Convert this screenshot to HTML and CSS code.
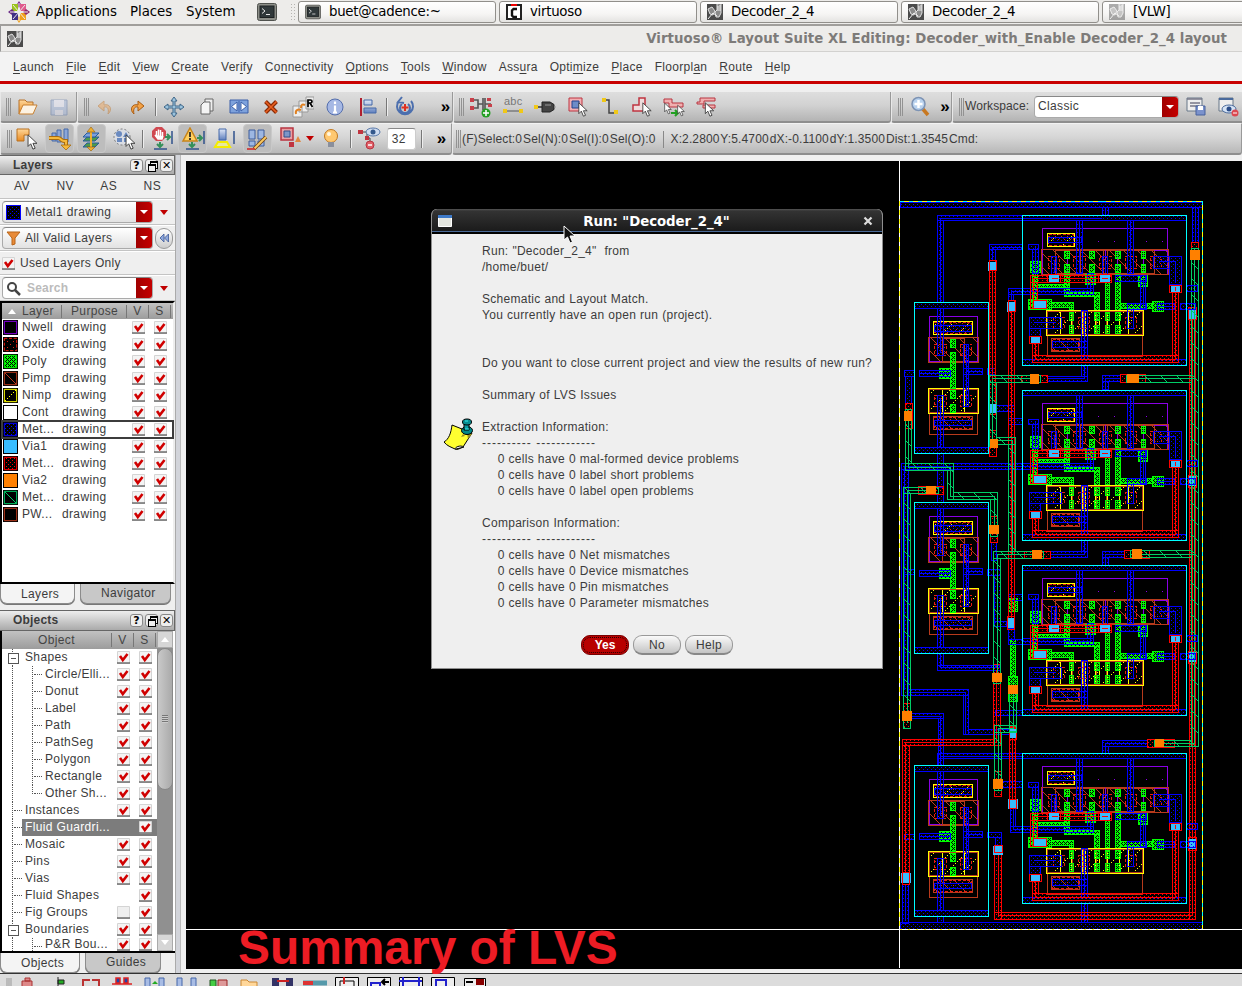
FILE: index.html
```html
<!DOCTYPE html>
<html lang="en">
<head>
<meta charset="utf-8">
<title>Virtuoso Layout Suite XL</title>
<link rel="stylesheet" href="styles.css">
</head>
<body>
<svg class="defs" aria-hidden="true">
<defs>
<linearGradient id="gBlue" x2="0" y2="1"><stop stop-color="#dfe8f8"/><stop offset="1" stop-color="#5f7fbd"/></linearGradient>
<linearGradient id="gOr" x2="0" y2="1"><stop stop-color="#ffd79a"/><stop offset="1" stop-color="#e98a20"/></linearGradient>
<symbol id="ck" viewBox="0 0 13 13"><path d="M.5.5h12v12H.5z" fill="#f4f4f4" stroke="#d4d4d4"/><path d="M0 12h13" stroke="#666" stroke-width="1.4"/><path d="M3 5l2.800 4L10.500 3" fill="none" stroke="#d00000" stroke-width="2.600"/></symbol>
<symbol id="un" viewBox="0 0 13 13"><path d="M.5.5h12v12H.5z" fill="#efefef" stroke="#d4d4d4"/><path d="M0 12h13" stroke="#666" stroke-width="1.4"/></symbol>
<symbol id="term" viewBox="0 0 20 18"><rect x=".5" y=".5" width="19" height="17" rx="2" fill="#8c8e88" stroke="#50524e"/><rect x="3" y="3" width="14" height="11.500" fill="#30383a" stroke="#1d2122"/><path d="M5 5.500l3 2.500-3 2.500M9 11.500h4" fill="none" stroke="#e8e8e8"/></symbol>
<symbol id="vlay" viewBox="0 0 16 16"><path d="M0 0h16v16H0z" fill="#4b4b4b"/><path d="M1 5l4-2 3 4-2 4-3-1zM10 0v6l-2 2 1 5h3l2-4V0" fill="#8a8a8a" stroke="#e0e0e0"/><path d="M1 15l5-6 4 3M11 2v5M13 1v6" fill="none" stroke="#f2f2f2"/></symbol>
<symbol id="cur" viewBox="0 0 12 18"><path d="M1 1v13l3-3 2.500 6 2.500-1-2.500-5.500H11z" fill="#fff" stroke="#333"/></symbol>
<symbol id="grip" viewBox="0 0 6 18"><path d="M.5 0v18M2.500 0v18M4.500 0v18" stroke="#929292"/></symbol>
<pattern id="p1" width="12" height="12" patternUnits="userSpaceOnUse"><path d="M0 0h3v3H0zM6 6h3v3H6z" fill="#00f"/></pattern>
<pattern id="p2" width="12" height="12" patternUnits="userSpaceOnUse"><path d="M3 0h3v3H3zM9 6h3v3H9z" fill="#f00"/></pattern>
<pattern id="p3" width="48" height="48" patternUnits="userSpaceOnUse"><path d="M0 0L48 48" stroke="#00cc66" stroke-width="3"/></pattern>
<pattern id="pp" width="12" height="12" patternUnits="userSpaceOnUse"><path d="M0 0h3v3H0zM3 3h3v3H3zM6 0h3v3H6zM9 3h3v3H9zM0 6h3v3H0zM3 9h3v3H3zM6 6h3v3H6zM9 9h3v3H9zM6 3h3v3H6zM0 9h3v3H0z" fill="#0f0"/></pattern>
<pattern id="pi" width="42" height="42" patternUnits="userSpaceOnUse"><path d="M0 0L42 42" stroke="#c0391f" stroke-width="3"/></pattern>
<pattern id="pn" width="48" height="48" patternUnits="userSpaceOnUse"><path d="M0 42h3v3H0zM6 36h3v3H6zM12 30h3v3h-3zM18 24h3v3h-3zM24 18h3v3h-3zM30 12h3v3h-3zM36 6h3v3h-3zM42 0h3v3h-3z" fill="#ff0"/></pattern>
<pattern id="px" width="18" height="18" patternUnits="userSpaceOnUse"><path d="M3 3h3v3H3zM12 12h3v3h-3z" fill="#e02010"/></pattern>

<!-- four-input gate cell -->
<g id="gate">
<path class="nw" d="M442 115h376v137H442z"/>
<path class="nwd" d="M610 154h3M658 154h3M754 154h3M802 154h3"/>
<path class="pi" d="M439 178h382v75H439zM481 181h297v69H481zM469 445h85v39h-85z"/>
<path class="pl" d="M518 181v69M555 181v69M626 181v69M637 181v69M715 181v69M457 433h285v66H457zM569 361v138"/>
<path class="nw" d="M545 181v69M630 181v69M668 181v69M705 181v69M745 181v69M518 205v45M778 181h40v18"/>
<path class="po" d="M508 184h15v21h-15zM583 184h16v21h-16zM661 184h16v21h-16zM739 184h12v21h-12zM508 223h15v24h-15zM583 223h16v24h-16zM661 223h16v24h-16zM739 223h12v24h-12zM406 214h31v33h-31zM412 250h15v105h-15zM427 283h96v10h-96zM508 253h15v67h-15zM508 307h106v13H508zM598 320h16v41h-16zM631 277h13v84h-13zM661 253h16v108h-16zM677 340h95v15h-95zM772 334h33v30h-33zM730 256h27v34h-27zM571 253h31v30h-31zM400 328h69v30h-69zM469 337h67v15h-67zM523 352h13v9h-13z"/>
<path class="ni" d="M454 361h291v75H454z"/>
<path class="nl" d="M496 364v69h33v-69M562 364v69M571 364v69M601 364v69M613 364v69M674 364v69M700 364v69M637 364v69"/>
<path class="pl" d="M457 364h285v69H457zM532 364v69M566 364v69M605 364v69M634 364v69"/>
<path class="po" d="M523 367h13v24h-13zM598 367h16v24h-16zM631 367h13v24h-13zM661 367h16v24h-16zM523 406h13v24h-13zM598 406h16v24h-16zM631 406h13v24h-13zM661 406h16v24h-16z"/>
<path class="ox" d="M460 199h34v36h-34zM536 199h36v36h-36zM614 199h34v36h-34zM691 199h34v36h-34zM766 199h34v36h-34zM474 382h34v33h-34zM550 382h33v33h-33zM691 382h33v33h-33zM473 449h78v32h-78z"/>
<path class="yb" d="M457 130h82v39h-82z"/><path class="ox" d="M461 134h74v31h-74z"/>
<path class="m1" d="M382 76h493v15H382zM382 508h493v18H382zM544 91h19v159h-19zM697 91h19v159h-19zM400 163h31v15h-31zM412 178h19v72h-19zM460 142h100v15H460zM469 199h16v54h-16zM623 199h15v54h-15zM775 199h48v36h-48zM823 199h37v84h-37zM382 295h214v18H382zM578 250h18v45h-18zM660 256h95v18h-95zM736 256h16v99h-16zM697 340h58v18h-58zM697 358h19v57h-19zM787 340h50v18h-50zM403 382h97v33h-97zM403 415h33v25h-33zM472 454h106v18H472zM559 361h19v147h-19zM856 340h46v18h-46zM875 286h33v18h-33z"/>
<path class="l1" d="M554 91v159M706 91v159M422 170v80M477 210v40M631 210v40M793 214h48v66M418 398h64M587 270v34H382M745 265v84M569 361v147M788 349h48"/>
<path class="m2" d="M406 256h244v21H406zM406 277h21v78h-21zM832 286h19v231h-19zM412 496h439v21H412zM412 439h19v57h-19z"/>
<path class="l2" d="M416 350v-84h215M841 296v212H422v-60"/>
<path class="v1" d="M462 253h30v26h-30zM615 253h30v26h-30zM418 330h34v26h-34zM827 284h28v26h-28zM407 437h29v25h-29z"/>
<path class="b2x" d="M457 253h40v24h-40zM611 253h39v24h-39zM415 331h39v24h-39zM823 286h36v21h-36zM403 439h36v21h-36zM470 266h20M620 266h20M841 290v14"/>
<path class="cy" d="M382 76h493v450H382z"/>
</g>

<!-- inverter cell -->
<g id="inv">
<path class="nw" d="M103 379h145v136H103z"/>
<path class="pi" d="M100 442h151v75H100zM142 445h67v70h-67zM115 679h118v39H115z"/>
<path class="pl" d="M103 670h145v63H103z"/>
<path class="ni" d="M100 595h151v75H100z"/><path class="nl" d="M142 598v69h67v-69"/><path class="pl" d="M103 598h145v69H103z"/>
<path class="po" d="M167 448h15v24h-15zM167 487h15v108h-15zM133 535h34v30h-34zM167 600h15v25h-15zM167 643h15v24h-15z"/>
<path class="yb" d="M115 394h118v39H115z"/>
<path class="ox" d="M119 398h110v31H119zM118 463h36v34h-36zM196 463h34v34h-34zM118 616h36v34h-36zM196 616h34v34h-34zM119 683h110v31H119z"/>
<path class="m1" d="M58 337h223v18H58zM58 773h223v17H58zM127 355h19v141h-19zM118 406h112v18H118zM73 541h94v18H73zM205 463h15v187h-15zM205 535h58v18h-58zM127 616h19v157h-19zM118 691h112v15H118z"/>
<path class="l1" d="M137 355v135M213 463v187M213 544h50M73 550h94M137 625v148"/>
<path class="cy" d="M58 337h223v453H58z"/>
</g>
</defs>
</svg>

<header class="panel">
  <svg class="foot" viewBox="0 0 22 22"><path fill="#7a1f8f" d="M11 0l2.500 4-2.500 3-2.500-3z"/><path fill="#9bc31c" d="M4 3h6v7H4z"/><path fill="#6a2a86" d="M0 11l4-3 3 3-3 3z"/><path fill="#e05a8c" d="M12 3h6v7h-6z"/><path fill="#f0a01c" d="M12 12h6v7h-6zM11 22l-2.500-4 2.500-3 2.500 3z"/><path fill="#3f2f86" d="M4 12h6v7H4z"/><path fill="#8f2a6b" d="M22 11l-4 3-3-3 3-3z"/><path d="M5 4l12 14M17 4L5 18M11 2v18M2 11h18" stroke="#ececea"/></svg>
  <span class="gm g1">Applications</span><span class="gm g2">Places</span><span class="gm g3">System</span>
  <svg class="launch"><use href="#term"/></svg>
  <span class="dots"></span>
  <div class="tasks">
    <div class="task"><svg class="i16"><use href="#term"/></svg>buet@cadence:~</div>
    <div class="task"><svg class="i16" viewBox="0 0 16 16"><path d="M1 1h14v14H1z" fill="#fff" stroke="#222" stroke-width="2"/><path d="M5 1h6" stroke="#e00" stroke-width="2"/><path d="M11 5H7.500L6 6.500v5L7.500 13H11" fill="none" stroke="#111" stroke-width="2.400"/></svg>virtuoso</div>
    <div class="task"><svg class="i16"><use href="#vlay"/></svg>Decoder_2_4</div>
    <div class="task"><svg class="i16"><use href="#vlay"/></svg>Decoder_2_4</div>
    <div class="task"><svg class="i16 faded"><use href="#vlay"/></svg>[VLW]</div>
  </div>
</header>
<div class="wtitle"><svg class="i16"><use href="#vlay"/></svg><span>Virtuoso® Layout Suite XL Editing: Decoder_with_Enable Decoder_2_4 layout</span></div>
<nav class="menu"><span><u>L</u>aunch</span><span><u>F</u>ile</span><span><u>E</u>dit</span><span><u>V</u>iew</span><span><u>C</u>reate</span><span>Ver<u>i</u>fy</span><span>Co<u>n</u>nectivity</span><span><u>O</u>ptions</span><span><u>T</u>ools</span><span><u>W</u>indow</span><span>Ass<u>u</u>ra</span><span>Opti<u>m</u>ize</span><span><u>P</u>lace</span><span>Floorpl<u>a</u>n</span><span><u>R</u>oute</span><span><u>H</u>elp</span></nav>

<div class="bar bar1">
  <div class="grp a1"><svg class="grip"><use href="#grip"/></svg>
    <svg class="ic" viewBox="0 0 22 22"><path d="M3 18V4h6l2 2h6v3" fill="url(#gOr)" stroke="#b8732a"/><path d="M3 18L7 9h14l-4 9z" fill="#fdf3e3" stroke="#c88030"/></svg>
    <svg class="ic faded" viewBox="0 0 22 22"><path d="M3 4h16v15H3z" fill="#9fb4dd" stroke="#5a74a8"/><path d="M6 4h10v7H6z" fill="#eef" /><path d="M7 14h8v5H7z" fill="#dde"/></svg></div>
  <div class="grp a2"><svg class="grip"><use href="#grip"/></svg>
    <svg class="ic faded" viewBox="0 0 22 22"><path d="M14 18c5-4 2-11-4-9V5L4 10l6 5v-4c4-1 5 3 4 7z" fill="#f0a050" stroke="#c07020"/></svg>
    <svg class="ic" viewBox="0 0 22 22"><path d="M8 18c-5-4-2-11 4-9V5l6 5-6 5v-4c-4-1-5 3-4 7z" fill="#f4a245" stroke="#a85c14"/></svg>
    <i class="sep"></i>
    <svg class="ic" viewBox="0 0 22 22"><path d="M11 1l3 4h-2v5h5V8l4 3-4 3v-2h-5v5h2l-3 4-3-4h2v-5H5v2l-4-3 4-3v2h5V5H8z" fill="#9bc3dd" stroke="#3f6688"/></svg>
    <svg class="ic" viewBox="0 0 22 22"><path d="M9 3h8v12H9z" fill="#eee" stroke="#666"/><path d="M5 9l3-3h6v12H5z" fill="#f4f4f4" stroke="#666"/></svg>
    <svg class="ic" viewBox="0 0 22 22"><path d="M2 4h18v13H2z" fill="#7ea2dc" stroke="#3a5fa8"/><path d="M3.500 10.500L9 6v9zM18.500 10.500L13 6v9zM11 5v11" fill="#fff" stroke="#3a5fa8"/></svg>
    <svg class="ic" viewBox="0 0 22 22"><path d="M5.500 5.500l11 11M16.500 5.500l-11 11" stroke="#8c2a05" stroke-width="4"/><path d="M5.500 5.500l11 11M16.500 5.500l-11 11" stroke="#ea6020" stroke-width="1.600"/></svg>
    <svg class="ic" viewBox="0 0 22 22"><path d="M1 10h9v11H1zM7 5h9v11H7zM14 1h8v12h-8z" fill="#eee" stroke="#999"/><path d="M4 18c-1-4 2-5 5-4M9 12c0-4 2-4 4-3" fill="none" stroke="#e08020" stroke-width="2"/><path d="M16 11V4h2.500c2 0 2 3 0 3H16M18 7l2.500 4" fill="none" stroke="#000" stroke-width="1.700"/></svg>
    <svg class="ic" viewBox="0 0 22 22"><circle cx="11" cy="11" r="8" fill="#a6b8e4" stroke="#546eac"/><path d="M11 5.500v2.500M11 9.500v7M9 16.500h4" stroke="#fff" stroke-width="2.200"/></svg>
    <svg class="ic" viewBox="0 0 22 22"><path d="M4 2v18" stroke="#b02030" stroke-width="2"/><path d="M7 4h8v5H7zM7 12h12v5H7z" fill="url(#gBlue)" stroke="#4468a8"/></svg>
    <i class="sep"></i>
    <svg class="ic" viewBox="0 0 22 22"><path d="M5 5a8 8 0 1 0 12 0M8 1L4 6l6 1M8 8a5 5 0 1 0 6 0" fill="none" stroke="#4c6fae" stroke-width="2"/><path d="M11 8v7M7.500 11.500h7" stroke="#e03020" stroke-width="2"/></svg>
    <b class="more m1x">»</b></div>
  <div class="grp a3"><svg class="grip"><use href="#grip"/></svg>
    <svg class="ic" viewBox="0 0 22 22"><path d="M2 4h6v8H2M8 8h5M13 2v12M15 2v12M15 8h6" fill="none" stroke="#555" stroke-width="1.600"/><path d="M0 2h4v4H0zM0 10h4v4H0zM17 2h4v3h-4zM18 8h4v3h-4z" fill="#c8404a"/><circle cx="16" cy="17" r="4.500" fill="#22a022"/><path d="M16 14v6M13 17h6" stroke="#fff" stroke-width="1.500"/></svg>
    <span class="ic abc">abc<svg viewBox="0 0 20 4"><path d="M2 2h16" stroke="#555"/><path d="M0 0h4v4H0zM16 0h4v4h-4z" fill="#f0c818"/></svg></span>
    <svg class="ic" viewBox="0 0 22 22"><path d="M2 11h7" stroke="#333" stroke-width="1.500"/><path d="M0 9h4v4H0z" fill="#f0c818"/><path d="M8 6h8l4 2.500v5L16 16H8z" fill="#444" stroke="#222"/><path d="M20 11h2M11 9h6" stroke="#999"/></svg>
    <svg class="ic" viewBox="0 0 22 22"><path d="M2 2h13v13H2z" fill="#f2b0b4" stroke="#bc3440"/><path d="M5 5h7v7H5z" fill="#6c8cc8" stroke="#24428c"/><use href="#cur" x="11" y="6" width="10" height="15"/></svg>
    <svg class="ic" viewBox="0 0 22 22"><path d="M5 4h5v13h7" fill="none" stroke="#444" stroke-width="1.500"/><path d="M3 2h4v4H3zM15 14h4v4h-4z" fill="#f0c818"/></svg>
    <svg class="ic" viewBox="0 0 22 22"><path d="M2 15V9h6V2h6v13z" fill="#eedddd" stroke="#c03440" stroke-width="1.500"/><use href="#cur" x="11" y="6" width="10" height="15"/></svg>
    <svg class="ic" viewBox="0 0 22 22"><path d="M1 3h8v4h11v4H6V7H1z" fill="#f0b0b0" stroke="#b83440"/><path d="M8 17h7M12 14l3 3-3 3" fill="none" stroke="#20a020" stroke-width="2"/><use href="#cur" x="1" y="6" width="8" height="13"/><use href="#cur" x="14" y="8" width="8" height="13"/></svg>
    <svg class="ic" viewBox="0 0 22 22"><path d="M5 2h15v3H9v3H2V6h3zM8 9h12v3H8z" fill="#f0b0b0" stroke="#b83440"/><use href="#cur" x="9" y="6" width="11" height="15"/></svg></div>
  <div class="grp a4"><svg class="grip"><use href="#grip"/></svg>
    <svg class="ic" viewBox="0 0 22 22"><path d="M13 12l6 7" stroke="#c87820" stroke-width="3.500"/><circle cx="9.500" cy="8" r="6.500" fill="#b9d2ee" stroke="#7d93b4" stroke-width="1.500"/><path d="M9.500 4v8M5.500 8h8" stroke="#fff" stroke-width="2.500"/></svg><b class="more m4x">»</b></div>
  <div class="grp a5"><svg class="grip"><use href="#grip"/></svg><span class="ws">Workspace:</span><div class="combo white wsc"><span>Classic</span><i class="dd"></i></div>
    <svg class="ic" viewBox="0 0 22 22"><path d="M2 2h15v13H2z" fill="#eee" stroke="#667788"/><path d="M2 3h15M5 7h10M5 10h9" stroke="#778" stroke-width="1.500"/><path d="M11 10h9v9h-9z" fill="#7b92cc" stroke="#46609c"/><path d="M13 10h5v4h-5z" fill="#fff"/></svg>
    <svg class="ic" viewBox="0 0 22 22"><path d="M2 2h14v13H2z" fill="#eee" stroke="#667788"/><path d="M2 3h14" stroke="#4a6a9c" stroke-width="2"/><ellipse cx="12" cy="13" rx="7" ry="4" fill="#d5e3f5" stroke="#4a6a9c"/><circle cx="12" cy="13" r="2.500" fill="#2a4c88"/><circle cx="18" cy="17" r="3.500" fill="#dc4850"/><path d="M16 17h4" stroke="#fff"/></svg></div>
</div>
<div class="bar bar2">
  <div class="grp b1"><svg class="grip"><use href="#grip"/></svg>
    <svg class="ic" viewBox="0 0 24 24"><path d="M2 2h12v6H9v6H2z" fill="url(#gOr)" stroke="#b87020"/><use href="#cur" x="12" y="7" width="11" height="16"/></svg>
    <span class="ic on"><svg viewBox="0 0 24 24"><path d="M10 3h4v12h-4zM17 2h4v13h-4zM5 6h4v8H5z" fill="#8ba6d8" stroke="#4468a8"/><path d="M2 11h9c3 0 3 3 6 3h2v5" fill="none" stroke="#a86c10" stroke-width="4"/><path d="M2 11h9c3 0 3 3 6 3h2v5" fill="none" stroke="#f6b93c" stroke-width="2"/><path d="M14 18h10l-5 5z" fill="#f6b93c" stroke="#a86c10" stroke-width=".8"/></svg></span>
    <span class="ic on"><svg viewBox="0 0 24 24"><path d="M4 20l4-4h12l-4 4zM4 14l4-4h12l-4 4z" fill="#4f9a4a" stroke="#275ca0"/><path d="M4 10l4-4h12l-4 4z" fill="#7da0dc" stroke="#275ca0"/><path d="M12 20V4" stroke="#f0b030" stroke-width="2"/><path d="M12 0l4 5H8zM12 24l4-4H8z" fill="#f0b030" stroke="#946010" stroke-width=".6"/></svg></span>
    <svg class="ic" viewBox="0 0 24 24"><circle cx="10" cy="10" r="8" fill="#dadde4" stroke="#777" stroke-dasharray="2 2"/><circle cx="7" cy="7" r="3" fill="#6a8ac0"/><path d="M14 5l3 5h-6zM5 11h5v4H5zM12 11h4v4h-4z" fill="#6a8ac0"/><use href="#cur" x="13" y="7" width="11" height="16"/></svg>
    <i class="sep"></i>
    <svg class="ic" viewBox="0 0 24 24"><path d="M7 0h6l4 4v6l-4 4H7l-4-4V4z" fill="#d04850"/><path d="M7.500 9V4M9.500 9V2.500M11.500 9V3M13.500 9V5M6 8l3 4h4l1-3" stroke="#fff" stroke-width="1.500" fill="#fff"/><path d="M23 4v13M5 22h13" stroke="#30528c" stroke-width="1.500"/><path d="M16 10h5M18 7l3 3-3 3M11 15v5M8 17l3 3 3-3" fill="none" stroke="#35905a" stroke-width="2"/></svg>
    <span class="ic on"><svg viewBox="0 0 24 24"><path d="M9 1l7 13H2z" fill="#ffd060" stroke="#c88418" stroke-width="1.500"/><path d="M9 5v5M9 11v2" stroke="#222" stroke-width="1.700"/><path d="M23 4v13M5 22h13" stroke="#30528c" stroke-width="1.500"/><path d="M16 11h5M18 8l3 3-3 3M11 15v5M8 17l3 3 3-3" fill="none" stroke="#35905a" stroke-width="2"/></svg></span>
    <svg class="ic" viewBox="0 0 24 24"><path d="M6 2h7v11H6z" fill="url(#gBlue)" stroke="#4468a8"/><path d="M5 15h9l3 5H2z" fill="#e8e8a0" stroke="#f4ec00" stroke-width="2"/><path d="M21 4v13" stroke="#30528c" stroke-width="1.500"/></svg>
    <span class="ic on"><svg viewBox="0 0 24 24"><path d="M4 3h6v9H4zM13 3h6v9h-6zM4 14h6v5H4zM13 14h6v5h-6z" fill="#9db7e2" stroke="#3c5c9c"/><path d="M21 10L9 22" stroke="#704010" stroke-width="3.500"/><path d="M21 10L9 22" stroke="#f8c860" stroke-width="2"/><path d="M2 22h8" stroke="#d02020" stroke-width="1.500"/></svg></span>
    <svg class="ic" viewBox="0 0 24 24"><path d="M3 1h12v12H3z" fill="#e8a0a4" stroke="#b83440" stroke-width="1.500"/><path d="M6 4h6v6H6z" fill="#7c96c8" stroke="#30508c"/><path d="M11 15h5v5h-5z" fill="#c03440"/><path d="M20 9l3 6h-6z" fill="#e08840"/></svg>
    <i class="rarr"></i>
    <svg class="ic bulb" viewBox="0 0 24 24"><circle cx="12" cy="9" r="6.500" fill="#ffc870" stroke="#c07820"/><path d="M9 15h6v5H9z" fill="#8a8f9c"/><circle cx="10" cy="7" r="2" fill="#fff6e0"/></svg>
    <i class="sep"></i>
    <svg class="ic" viewBox="0 0 24 24"><path d="M4 5h6v6h3v5" fill="none" stroke="#444"/><path d="M1 3h5v4H1zM8 9h4v4H8z" fill="#c03440"/><ellipse cx="16" cy="5" rx="7" ry="4" fill="#cfdcf0" stroke="#5878a8"/><circle cx="16" cy="5" r="2.500" fill="#34588c"/><circle cx="13" cy="18" r="4" fill="#e06068" stroke="#b83440"/><path d="M11 18h4" stroke="#fff" stroke-width="1.500"/></svg>
    <span class="num">32</span><i class="sep s2"></i><b class="more">»</b></div>
  <div class="grp b2"><svg class="grip"><use href="#grip"/></svg><span class="st1">(F)Select:0 Sel(N):0 Sel(I):0 Sel(O):0</span><span class="st2">X:2.2800 Y:5.4700 dX:-0.1100 dY:1.3500 Dist:1.3545 Cmd:</span></div>
</div>

<main>
<aside>
  <div class="dock"><b>Layers</b><i>?</i><i class="rst"></i><i>✕</i></div>
  <div class="modes"><span>AV</span><span>NV</span><span>AS</span><span>NS</span></div>
  <div class="frow"><div class="combo side"><svg class="sw" viewBox="0 0 45 45"><path d="M1.500 1.500h42v42h-42z" class="s1"/></svg><span>Metal1 drawing</span><i class="dd"></i></div><i class="rarr"></i></div>
  <div class="frow"><div class="combo side"><svg class="sw" viewBox="0 0 15 15"><path d="M1 1h13L9 7v6l-3 1V7z" fill="#e88a38" stroke="#b86418"/></svg><span>All Valid Layers</span><i class="dd"></i></div><b class="rew"><svg viewBox="0 0 10 10"><path d="M5 1v8L1 5zM9.500 1v8l-4-4z" fill="#8fa8dc" stroke="#3c5898" stroke-width=".8"/></svg></b></div>
  <div class="frow used"><svg class="ck"><use href="#ck"/></svg><span>Used Layers Only</span></div>
  <div class="frow"><div class="combo side white"><svg class="sw" viewBox="0 0 15 15"><circle cx="6" cy="6" r="4" fill="#fff" stroke="#444" stroke-width="2"/><path d="M9 9l5 5" stroke="#444" stroke-width="2.500"/></svg><span class="ph">Search</span><i class="dd"></i></div><i class="rarr"></i></div>
  <div class="ltab">
    <div class="lr lh"><i class="up"></i><span>Layer</span><span>Purpose</span><span>V</span><span>S</span></div>
    <div class="lr"><svg class="sw" viewBox="0 0 45 45"><path class="bk" stroke="#8a00e6" d="M4 4h37v37H4z"/></svg><span>Nwell</span><span>drawing</span><svg class="ck"><use href="#ck"/></svg><svg class="ck"><use href="#ck"/></svg></div>
    <div class="lr"><svg class="sw" viewBox="0 0 45 45"><path class="bk ox" d="M4 4h37v37H4z"/></svg><span>Oxide</span><span>drawing</span><svg class="ck"><use href="#ck"/></svg><svg class="ck"><use href="#ck"/></svg></div>
    <div class="lr"><svg class="sw" viewBox="0 0 45 45"><path class="po" d="M4 4h37v37H4z"/></svg><span>Poly</span><span>drawing</span><svg class="ck"><use href="#ck"/></svg><svg class="ck"><use href="#ck"/></svg></div>
    <div class="lr"><svg class="sw" viewBox="0 0 45 45"><path class="pi" d="M4 4h37v37H4z"/></svg><span>Pimp</span><span>drawing</span><svg class="ck"><use href="#ck"/></svg><svg class="ck"><use href="#ck"/></svg></div>
    <div class="lr"><svg class="sw" viewBox="0 0 45 45"><path class="ni" d="M4 4h37v37H4z"/></svg><span>Nimp</span><span>drawing</span><svg class="ck"><use href="#ck"/></svg><svg class="ck"><use href="#ck"/></svg></div>
    <div class="lr"><svg class="sw" viewBox="0 0 45 45"><path fill="#fff" d="M3 3h39v39H3z"/></svg><span>Cont</span><span>drawing</span><svg class="ck"><use href="#ck"/></svg><svg class="ck"><use href="#ck"/></svg></div>
    <div class="lr cur"><svg class="sw" viewBox="0 0 45 45"><path class="m1" d="M4 4h37v37H4z"/></svg><span>Met...</span><span>drawing</span><svg class="ck"><use href="#ck"/></svg><svg class="ck"><use href="#ck"/></svg></div>
    <div class="lr"><svg class="sw" viewBox="0 0 45 45"><path fill="#38bdff" d="M3 3h39v39H3z"/></svg><span>Via1</span><span>drawing</span><svg class="ck"><use href="#ck"/></svg><svg class="ck"><use href="#ck"/></svg></div>
    <div class="lr"><svg class="sw" viewBox="0 0 45 45"><path class="m2" d="M4 4h37v37H4z"/></svg><span>Met...</span><span>drawing</span><svg class="ck"><use href="#ck"/></svg><svg class="ck"><use href="#ck"/></svg></div>
    <div class="lr"><svg class="sw" viewBox="0 0 45 45"><path fill="#ff8000" d="M3 3h39v39H3z"/></svg><span>Via2</span><span>drawing</span><svg class="ck"><use href="#ck"/></svg><svg class="ck"><use href="#ck"/></svg></div>
    <div class="lr"><svg class="sw" viewBox="0 0 45 45"><path class="m3" d="M4 4h37v37H4z"/></svg><span>Met...</span><span>drawing</span><svg class="ck"><use href="#ck"/></svg><svg class="ck"><use href="#ck"/></svg></div>
    <div class="lr"><svg class="sw" viewBox="0 0 45 45"><path class="bk" stroke="#b83a1c" d="M4 4h37v37H4z"/></svg><span>PW...</span><span>drawing</span><svg class="ck"><use href="#ck"/></svg><svg class="ck"><use href="#ck"/></svg></div>
  </div>
  <div class="tabs t1"><span class="act">Layers</span><span>Navigator</span></div>
  <div class="dock d2"><b>Objects</b><i>?</i><i class="rst"></i><i>✕</i></div>
  <div class="otab">
    <div class="olist">
      <div class="or oh"><span>Object</span><span>V</span><span>S</span></div>
      <div class="or box"><span>Shapes</span><svg class="ck"><use href="#ck"/></svg><svg class="ck"><use href="#ck"/></svg></div>
      <div class="or sub"><span>Circle/Elli...</span><svg class="ck"><use href="#ck"/></svg><svg class="ck"><use href="#ck"/></svg></div>
      <div class="or sub"><span>Donut</span><svg class="ck"><use href="#ck"/></svg><svg class="ck"><use href="#ck"/></svg></div>
      <div class="or sub"><span>Label</span><svg class="ck"><use href="#ck"/></svg><svg class="ck"><use href="#ck"/></svg></div>
      <div class="or sub"><span>Path</span><svg class="ck"><use href="#ck"/></svg><svg class="ck"><use href="#ck"/></svg></div>
      <div class="or sub"><span>PathSeg</span><svg class="ck"><use href="#ck"/></svg><svg class="ck"><use href="#ck"/></svg></div>
      <div class="or sub"><span>Polygon</span><svg class="ck"><use href="#ck"/></svg><svg class="ck"><use href="#ck"/></svg></div>
      <div class="or sub"><span>Rectangle</span><svg class="ck"><use href="#ck"/></svg><svg class="ck"><use href="#ck"/></svg></div>
      <div class="or sub last"><span>Other Sh...</span><svg class="ck"><use href="#ck"/></svg><svg class="ck"><use href="#ck"/></svg></div>
      <div class="or"><span>Instances</span><svg class="ck"><use href="#ck"/></svg><svg class="ck"><use href="#ck"/></svg></div>
      <div class="or sel"><span>Fluid Guardri...</span><i></i><svg class="ck"><use href="#ck"/></svg></div>
      <div class="or"><span>Mosaic</span><svg class="ck"><use href="#ck"/></svg><svg class="ck"><use href="#ck"/></svg></div>
      <div class="or"><span>Pins</span><svg class="ck"><use href="#ck"/></svg><svg class="ck"><use href="#ck"/></svg></div>
      <div class="or"><span>Vias</span><svg class="ck"><use href="#ck"/></svg><svg class="ck"><use href="#ck"/></svg></div>
      <div class="or"><span>Fluid Shapes</span><i></i><svg class="ck"><use href="#ck"/></svg></div>
      <div class="or"><span>Fig Groups</span><svg class="ck"><use href="#un"/></svg><svg class="ck"><use href="#ck"/></svg></div>
      <div class="or box"><span>Boundaries</span><svg class="ck"><use href="#ck"/></svg><svg class="ck"><use href="#ck"/></svg></div>
      <div class="or sub end"><span>P&amp;R Bou...</span><svg class="ck"><use href="#ck"/></svg><svg class="ck"><use href="#ck"/></svg></div>
    </div>
    <div class="scroll"><i class="sb"><u class="up"></u></i><i class="thumb"></i><i class="sb dn"><u class="up"></u></i></div>
  </div>
  <div class="tabs t2"><span class="act">Objects</span><span>Guides</span></div>
</aside>
<section class="canvas">
<svg class="lay" viewBox="186 161 1056 808" shape-rendering="crispEdges">
<g transform="translate(895 190) scale(.33333333333)" fill="none" stroke-width="3">
<path class="po" d="M346 1348h15v110h-15zM340 1225h28v40h-28zM340 1458h28v77h-28z"/>
<path class="m1" d="M15 37h907v15H15zM15 2197h907v20H15zM127 76h255v15H127zM127 91h19v246h-19zM622 52h19v24h-19zM892 52h19v105h-19zM283 163h99v15h-99zM283 178h19v33h-19zM340 295h42v18h-42zM340 313h16v18h-16zM30 559h18v81H30zM28 541h30v18H28zM277 535h24v18h-24zM458 559h120v15H458zM559 526h19v33h-19zM622 556h54v18h-54zM622 574h19v24h-19zM302 646h56v18h-56zM340 685h42v18h-42zM19 820h363v18H19zM19 838h21v678H19zM40 1498h180v18H40zM205 1516h15v117h-15zM220 1618h123v15H220zM127 913h19v24h-19zM127 790h19v102h-19zM48 1570h98v15H48zM130 1585h16v141h-16zM290 1057h15v53h-15zM466 1084h112v18H466zM559 1051h19v33h-19zM622 1084h66v18h-66zM622 1102h19v24h-19zM277 1138h39v18h-39zM298 1156h18v154h-18zM298 1294h37v16h-37zM340 1213h42v18h-42zM340 1348h42v15h-42zM340 1315h18v33h-18zM127 1426h189v14H127zM127 1390h19v36h-19zM22 2083h19v117H22zM323 1774h59v19h-59zM346 1909h36v18h-36zM346 1855h15v54h-15zM127 1690h255v15H127zM127 1705h19v21h-19zM300 1561h82v14h-82zM622 1651h135v18H622zM622 1669h19v21h-19zM277 1927h43v15h-43zM302 1942h18v26h-18zM127 2179h19v18h-19zM559 2141h19v56h-19zM28 1138h30v16H28zM28 1933h30v15H28z"/>
<path class="l1" d="M137 337V85h485M292 211v-40h90M350 331v-27h32M902 52v105M632 52v24M569 526v40H458M632 598v-33h44M28 1500V829h354M569 1051v42H466M632 1126v-33h56M137 1390v43h179M212 1633v-126H40M137 1726v-148H48M632 1690v-30h125M137 1726v-28h245M32 2083v110M354 1855v63h28M569 2141v56"/>
<path class="m2" d="M283 211h19v461h-19zM340 331h18v960h-18zM889 157h21v50h-21zM884 352h18v1835h-18zM379 556h79v21h-79zM676 553h76v24h-76zM31 640h21v75H31zM283 720h21v80h-21zM287 980h19v77h-19zM70 889h76v24H70zM388 1084h78v21h-78zM688 1081h76v24h-76zM25 1540h21v75H25zM295 1423h21v243h-21zM22 1648h273v18H22zM22 1666h22v417H22zM298 1745h22v75h-22zM343 1610h19v245h-19zM757 1648h80v24h-80zM298 1966h22v221h-22zM298 2166h604v21H298z"/>
<path class="l2" d="M292 228v444M349 345v940M893 360v1816H310V1980M305 1440v216H32v410M352 1620v220"/>
<path class="v1" d="M280 215h24v28h-24zM337 335h24v32h-24zM881 360h24v28h-24zM881 858h24v30h-24zM881 1385h24v30h-24zM881 1948h24v30h-24zM283 642h21v28h-21zM335 1284h25v31h-25zM18 2048h29v30H18zM341 1616h22v29h-22zM340 1828h28v30h-28zM294 1968h29v28h-29z"/>
<path class="b2x" d="M283 211h21v30h-21zM340 331h21v32h-21zM879 352h26v36h-26zM879 855h26v36h-26zM879 1384h26v36h-26zM879 1943h26v38h-26zM337 1278h21v40h-21zM343 1827h22v27h-22zM297 1966h25v21h-25zM22 2046h22v36H22zM343 1612h20v36h-20z"/>
<path class="m3" d="M889 175h22v1494h-22zM283 556h154v21H283zM695 556h194v21H695zM283 577h21v193h-21zM304 742h57v21h-57zM340 763h21v321h-21zM31 658h19v162H31zM31 820h145v21H31zM157 841h19v87h-19zM176 907h132v21H176zM287 928h21v112h-21zM25 892h105v18H25zM25 910h22v705H25zM295 1084h151v21H295zM295 1105h21v375h-21zM706 1081h183v21H706zM343 1485h21v140h-21zM298 1606h66v21h-66zM298 1627h22v173h-22zM777 1651h112v18H777z"/>
<path class="l3" d="M898 190v1470H800M290 566h130M293 570v190M290 752h61v340M40 670v161h127v87h130v110M37 1600V901h70M306 1470V1094h130M715 1092h183M712 566h186M354 1500v115h-44v170"/>
<path class="v2" d="M886 180h28v29h-28zM28 663h24v30H28zM405 553h28v29h-28zM697 553h36v25h-36zM285 747h23v27h-23zM92 888h31v24H92zM282 1005h30v27h-30zM411 1080h30v27h-30zM711 1077h30v29h-30zM22 1563h28v30H22zM291 1449h30v27h-30zM340 1485h28v27h-28zM294 1767h29v30h-29zM780 1648h26v24h-26z"/>
<use href="#gate"/><use href="#gate" y="525"/><use href="#gate" y="1050"/><use href="#gate" y="1614"/>
<use href="#inv"/><use href="#inv" y="600"/><use href="#inv" y="1389"/>
<path d="M13.500 34.500H922.500V2217" stroke="#ff0"/><path d="M622 34.500h300V2217M13.500 34.500H622" stroke="#0ff" stroke-dasharray="12 15"/>
<path d="M13.500-87V2334M-2127 2218.500H1041" stroke="#fff"/><path d="M13.500 34V2217" stroke="#ff0" stroke-dasharray="15 12"/><path d="M13.500 2218.500H922" stroke="#ff0" stroke-dasharray="6 18"/>
</g>
</svg>
</section>
</main>
<footer class="bar3">
<svg class="fi" viewBox="0 0 500 13"><path d="M7 4v9M9 4v9M11 4v9" stroke="#999"/><path d="M22 7h10v6H22zM25 4h5v3h-5z" fill="#d88" stroke="#a33"/><path d="M58 3v10M58 6h6v4h-6z" stroke="#222" fill="#2a2"/><path d="M83 13V6h7M99 13V6h-7" fill="none" stroke="#b33" stroke-width="2"/><path d="M112 10h20M116 4h4v5h-4zM124 4h4v5h-4z" fill="#24a" stroke="#d22" stroke-width="1.500"/><path d="M145 4h5v9h-5zM159 4h5v9h-5zM177 4h5v9h-5zM191 4h5v9h-5z" fill="#a8bce4" stroke="#46a"/><path d="M152 10l3-3 3 3z" fill="#2a2"/><path d="M210 6h6v7h-6z" fill="#4c4" stroke="#252"/><path d="M218 6h9v7h-9z" fill="#d99" stroke="#922"/><path d="M241 13V6h6l2 2h8v5z" fill="#ffd79a" stroke="#c83"/><path d="M272 4h7v9h-7zM286 4h7v9h-7z" fill="#336"/><path d="M277 7h12" stroke="#c22" stroke-width="2"/><path d="M303 9h24" stroke="#59a" stroke-width="5"/><path d="M303 9h10" stroke="#d33" stroke-width="4"/><path d="M335.500 3.500h23V13h-23zM367.500 3.500h23V13h-23zM399.500 3.500h23V13h-23zM431.500 3.500h23V13h-23zM464.500 4.500h21V13h-21z" fill="#eee" stroke="#000"/><path d="M340 13V7h14v6" fill="none" stroke="#000"/><path d="M344 3v7" stroke="#c22" stroke-width="2"/><path d="M371 13V9h9v4M399 7h23M403 3v10M419 3v10M436 13V6h10v7" fill="none" stroke="#22c" stroke-width="2"/><path d="M382 8h7M385 5l-3 3 3 3M466 8h7" stroke="#000" stroke-width="2"/><path d="M476 5h8v6h-8z" fill="#800"/></svg>
</footer>

<div class="caption">Summary of LVS</div>

<div class="dlg">
  <div class="dtitle"><svg class="win" viewBox="0 0 14 12"><path d="M.5.5h13v11H.5z" fill="#e4e6e0" stroke="#fff"/><path d="M0 0h14v3H0z" fill="#3e7ac8"/></svg><b>Run: "Decoder_2_4"</b><svg class="x" viewBox="0 0 10 10"><path d="M1.500 1.500l7 7M8.500 1.500l-7 7" stroke="#ddd" stroke-width="2.200"/></svg></div>
  <div class="dbody">
    <svg class="note" viewBox="0 0 32 34"><path d="M9 7l20 8-9 14c-4 2-6 3-8 2-4-2-8-3-11-7 5-3 7-9 8-17z" fill="#ffff30" stroke="#000"/><path d="M13 31c-3 0 3-5 8-2z" fill="#fff" stroke="#000"/><path d="M20 16l-2 3 4-1zM24 15l5 1-4 5z" fill="#9a8e20"/><ellipse cx="24" cy="12.500" rx="5.500" ry="4" fill="#088" stroke="#000"/><path d="M21 5h5v7h-5z" fill="#0a9aa0" stroke="#000"/><ellipse cx="24" cy="4" rx="4.500" ry="3" fill="#088c90" stroke="#000"/><path d="M22 3h3M22 11h4" stroke="#3ee"/></svg>
<pre>Run: "Decoder_2_4"  from
/home/buet/

Schematic and Layout Match.
You currently have an open run (project).


Do you want to close current project and view the results of new run?

Summary of LVS Issues

Extraction Information:
<span class="dash">---------- ------------</span>
    0 cells have 0 mal-formed device problems
    0 cells have 0 label short problems
    0 cells have 0 label open problems

Comparison Information:
<span class="dash">---------- ------------</span>
    0 cells have 0 Net mismatches
    0 cells have 0 Device mismatches
    0 cells have 0 Pin mismatches
    0 cells have 0 Parameter mismatches</pre>
    <div class="btns"><span class="yes">Yes</span><span>No</span><span>Help</span></div>
  </div>
</div>
<svg class="mouse" viewBox="0 0 13 20"><path d="M1 1v14l3.500-3 2.500 6 2.500-1-2.500-6H12z" fill="#111" stroke="#fff"/></svg>
</body>
</html>
```
FILE: styles.css
```css
*{box-sizing:border-box}
body{margin:0;width:1242px;height:986px;overflow:hidden;position:relative;display:flex;flex-direction:column;background:#efefef;font:12px/17px "Liberation Sans",Arial,sans-serif;letter-spacing:.35px;color:#3c3c3c}
i,u.up{font-style:normal;text-decoration:none}
svg{display:block;flex:none}
.defs{position:absolute;width:0;height:0}
.i16{width:16px;height:16px}
.faded{opacity:.45}

/* layout layers */
.m1{fill:url(#p1);stroke:#00f}.l1{stroke:#00f}
.m2{fill:url(#p2);stroke:#f00}.l2,.b2x{stroke:#f00}
.m3{fill:url(#p3);stroke:#00cc66}.l3{stroke:#00cc66}
.po{fill:url(#pp);stroke:#0f0}
.pi{fill:url(#pi);stroke:#b83a1c}.pl{stroke:#b83a1c}
.ni{fill:url(#pn);stroke:#ff0}.nl{stroke:#ff0}
.yb{fill:url(#pn);stroke:#ff0}
.ox{fill:url(#px);stroke:#e81c10;stroke-dasharray:9 5}
.nw,.nwd{stroke:#8a00e6}
.cy{stroke:#0ff}
.v1{fill:#38bdff}.v2{fill:#ff8000}

/* desktop panel */
.panel{height:26px;flex:none;display:flex;align-items:center;background:#edecea;border-bottom:2px solid #a09e9b;font:13.33px/24px "DejaVu Sans",sans-serif;letter-spacing:-.05px;color:#000;padding-bottom:1px}
.foot{width:22px;height:22px;margin-left:8px}
.gm{white-space:nowrap;flex:none}
.g1{margin-left:6px;width:94px}.g2{width:56px}.g3{width:71px}
.launch{width:20px;height:18px}
.dots{width:5px;height:18px;flex:none;margin:0 3px 0 13px;background:radial-gradient(circle,#b5b3b0 35%,transparent 40%) 0 0/3px 3px}
.tasks{display:flex;gap:3px;flex:none}
.task{width:198px;height:22px;display:flex;align-items:center;gap:8px;padding-left:6px;border:1px solid #918f8b;border-radius:3px;background:linear-gradient(#fff,#f6f5f4 60%,#e4e3e1);line-height:20px;white-space:nowrap;flex:none;letter-spacing:-.28px}
.wtitle{height:26px;flex:none;display:flex;align-items:center;justify-content:space-between;padding:0 15px 0 6px;background:#edecea;border-left:1px solid #999;border-bottom:1px solid #d2d1cf;font:bold 13.33px "DejaVu Sans",sans-serif;letter-spacing:.06px;color:#7d7b79}
.menu{height:32px;flex:none;background:#f3f3f3;border-bottom:3px solid #c80000;display:flex;gap:12px;padding:7px 0 0 13px;white-space:nowrap;letter-spacing:.28px}
.menu u{text-underline-offset:2px}

/* toolbars */
.bar{flex:none;display:flex}
.bar1{height:39px;padding-top:8px}
.bar2{height:32px}
.grp{display:flex;align-items:center;background:linear-gradient(#dedede,#d2d2d2 45%,#b4b4b4);border-bottom:2px solid #8e8e8e;border-right:1px solid #999;border-left:1px solid #e8e8e8;border-radius:0 0 3px 3px;padding-left:5px;flex:none}
.bar2 .grp{background:linear-gradient(#e6e6e6,#d6d6d6 45%,#b8b8b8);border-top:1px solid #f2f2f2}
.grip{width:6px;height:18px}
.ic{width:22px;height:22px;margin:0 5.100px}
.a1{width:77px}.a1 .ic{margin:0 7px 0 4px}.a1 .ic.faded{margin:0 0 0 3px}
.a2{width:376px;padding-left:6px}
.a3{width:438px}
.a4{width:61px;padding-left:6px}
.a5{flex:1;padding-left:6px}
.a2 .grip+.ic{margin-left:4px}
.sep{width:1px;height:18px;background:#777;box-shadow:1px 0 #eee;margin:0 2px;flex:none}
.more{font:bold 17px/17px "Liberation Sans",sans-serif;color:#000;letter-spacing:0}
.m1x{margin-left:20px}
.m4x{margin-left:4px}
.abc{font-size:11px;line-height:10px;text-align:center;color:#777;display:flex;flex-direction:column;align-items:center;letter-spacing:.3px;gap:3px}
.abc svg{width:20px;height:4px}
.ws{width:69px;letter-spacing:.1px;flex:none}
.b1{width:452px;padding-left:6px}
.b1 .ic{width:24px;height:24px;margin:0 4.100px}
.b1 .ic.on{width:29px;height:29px;margin:0 1.600px;border-radius:4px;background:#bdbdbd;border:1px solid #c9c9c9;display:flex;align-items:center;justify-content:center}
.on svg{width:24px;height:24px}
.b1 .bulb{margin:0 5px}
.rarr{border:4px solid transparent;border-top:5px solid #c00000;border-bottom:0;flex:none}
.b1 .grip+.ic{margin-left:2px}
.num{width:29px;height:22px;background:#fff;border:1px solid #ccc;border-top-color:#888;border-radius:3px;padding:1px 4px;margin-left:2px;line-height:18px;flex:none}
.s2{margin:0 15px 0 5px}
.b2{flex:1;padding-left:3px;letter-spacing:.13px;word-spacing:-2.500px;white-space:nowrap}
.b2 span{position:relative;top:1px}
.st1{padding-right:7px;margin-right:2px;border-right:1px solid #888}
.st2{padding-left:5px}

/* combos */
.combo{display:flex;align-items:center;height:22px;border:1px solid #aaa;border-top-color:#888;border-radius:4px;background:linear-gradient(#fff,#e2e2e2);white-space:nowrap;overflow:hidden}
.combo.white{background:#fff}
.dd{width:16px;height:20px;background:linear-gradient(90deg,#a00000,#c40000);margin-left:auto;display:flex;align-items:center;justify-content:center;flex:none}
.dd::after{content:"";border:4px solid transparent;border-top:4px solid #fff;border-bottom:0}
.wsc{width:145px;padding-left:3px;margin-right:1px}
.a5 .ic{margin:0 5px}

/* sidebar */
main{height:818px;flex:none;display:flex}
aside{width:175px;flex:none;display:flex;flex-direction:column}
.dock{height:20px;flex:none;display:flex;align-items:center;border:1px solid #666;border-left-width:0;background:linear-gradient(#eee,#aaa);padding:0 1px 0 13px;gap:2px;letter-spacing:.2px}
.dock b{margin-right:auto}
.dock i{width:13px;height:13px;border:1px solid #888;border-radius:3px;background:#eee;font:bold 11px/11px "DejaVu Sans",sans-serif;text-align:center;color:#000;letter-spacing:0}
.dock .rst{position:relative}
.rst::before,.rst::after{content:"";position:absolute;width:6px;height:5px;border:1px solid #000;border-top-width:2px;background:#eee;left:4px;top:1px}
.rst::after{left:2px;top:4px}
.modes{height:24px;flex:none;display:flex;padding:3px 14px 0;justify-content:space-between;border-bottom:1px solid #c4c4c4}
.frow{height:26px;flex:none;display:flex;align-items:center;padding-left:2px;border-bottom:1px solid #c4c4c4;border-top:1px solid #fff}
.frow.used{height:24px}
.side{width:151px;padding-left:3px}
.side span{margin-left:4px}
.frow .rarr{margin-left:7px}
.sw{width:15px;height:15px}
.s1{fill:url(#p1);stroke:#00f;stroke-width:3}
.combo .sw:has(.s1){background:#000}
.side .ph{color:#bbb;font-weight:bold;letter-spacing:.2px;margin-left:6px}
.rew{width:18px;height:21px;border:1px solid #999;border-radius:9px;background:linear-gradient(#fff,#ccc);margin-left:2px;display:flex;align-items:center;justify-content:center}
.rew svg{width:10px;height:10px}
.ck{width:13px;height:13px;justify-self:center}
.used{gap:5px}
.ltab{height:283px;flex:none;background:#fff;border-left:2px solid #000;border-top:2px solid #000;border-bottom:2px solid #000;border-right:2px solid #eee}
.lr{height:17px;display:grid;grid-template-columns:20px 40px 65px 22px 22px;align-items:center;white-space:nowrap}
.lr .sw{background:#000;margin-left:1px;stroke-width:3;fill:none}
.bk{fill:#000}
.bk.ox{fill:url(#px)}
.lh{height:16px;background:linear-gradient(#c2c2c2,#9c9c9c);color:#444}
.lh span:nth-child(3){padding-left:9px}
.lh span{border-right:1px solid #777;line-height:13px}
.lh span:nth-child(n+4){text-align:center}
.up{display:block;width:0;height:0;border:4px solid transparent;border-bottom:5px solid #fff;border-top:0;margin:auto}
.lr.cur{outline:2px solid #3c3c3c;outline-offset:-1px;position:relative}
.tabs{display:flex;gap:5px;background:#efefef;flex:none}
.tabs span{border:1px solid #8c8c8c;border-top:0;border-radius:0 0 7px 7px;background:#c8c8c8;height:20px;padding-left:20px;line-height:19px;box-shadow:0 1px #777}
.tabs .act{background:#f4f4f4}
.t1{height:25px}.t1 span{width:91px}.t1 .act{width:75px;line-height:21px}
.t2{height:21px}.t2 span{width:76px}.t2 .act{width:80px;line-height:21px}
.d2{margin-top:1px;height:21px}
.otab{height:322px;flex:none;display:flex;background:#fff;border-left:2px solid #000;border-bottom:2px solid #000;overflow:hidden}
.olist{width:155px}
.or{height:17px;display:grid;grid-template-columns:110px 22px 22px;align-items:center;white-space:nowrap;position:relative}
.or.end{height:13px;line-height:13px;overflow:hidden}
.or span{padding-left:23px}
.or::before{content:"";position:absolute;left:10px;top:0;bottom:0;border-left:1px dotted #555}
.or::after{content:"";position:absolute;left:12px;width:8px;top:8px;border-top:1px dotted #555}
.or.sub span{padding-left:43px}
.or.sub::after{left:30px;width:10px;top:0;height:17px;border-top:0;border-left:1px dotted #555}
.or.sub.last::after{height:9px}
.or.sub span::before{content:"";position:absolute;left:32px;width:8px;top:8px;border-top:1px dotted #555}
.or.box::after{left:6px;width:9px;height:9px;top:4px;border:1px solid #555;background:linear-gradient(#555,#555) center/5px 1px no-repeat #fff}
.or.sel{color:#fff;background:linear-gradient(90deg,#fff 20px,#7c7c7c 20px)}
.or.oh{height:18px;background:linear-gradient(#c2c2c2,#9c9c9c);color:#444}
.or.oh::before,.or.oh::after{display:none}
.or.oh span{text-align:center;padding-left:0;border-right:1px solid #777;line-height:14px}
.scroll{width:16px;background:#909090;display:flex;flex-direction:column}
.sb{height:17px;background:#d6d6d6;border:1px solid #aaa;display:flex}
.thumb{height:142px;border-radius:8px;border:1px solid #888;background:repeating-linear-gradient(#777 0 1px,#ccc 1px 2px) center/6px 8px no-repeat,linear-gradient(90deg,#c9c9c9,#aaa)}
.dn{margin-top:auto}.dn u{transform:rotate(180deg)}
.canvas{flex:1;border-left:1px solid #aaa;background:#f0f0f0;padding:6px 0 0 10px;box-shadow:inset 4px 0 #d2d4da,inset 5px 0 #bbb}
.lay{width:1056px;height:808px;background:#000}
.bar3{flex:1;background:#dcdcdc;border-top:1px solid #333}
.fi{width:500px;height:13px}
.caption{position:absolute;left:238px;top:921px;font:bold 47.900px/54px "Liberation Sans",sans-serif;letter-spacing:0;color:#ed1c24;white-space:nowrap}

/* dialog */
.dlg{position:absolute;left:431px;top:209px;width:452px;height:460px;border-radius:6px 6px 0 0;overflow:hidden;background:#efefef;border:1px solid #8f8f8f;border-width:0 1px 1px}
.dtitle{height:25px;background:linear-gradient(#555 0,#333 2px,#1a1a1a);border-bottom:2px solid #000;box-shadow:inset 0 -1px #4a6a98;display:flex;align-items:center;padding:1px 9px 0 6px;color:#fff;font:bold 13.33px "DejaVu Sans",sans-serif;letter-spacing:-.05px}
.dtitle b{flex:1;text-align:center;padding-right:2px}
.win{width:14px;height:12px}.x{width:10px;height:10px}
.dbody{position:relative;padding:9px 0 0 50px}
.dlg pre{margin:0;font:12px/16px "Liberation Sans",sans-serif;letter-spacing:.28px;word-spacing:.3px}
.dash{letter-spacing:.97px}
.note{position:absolute;left:11px;top:184px;width:32px;height:34px}
.btns{display:flex;gap:4px;margin:24px 0 0 99px}
.btns span{width:48px;height:20px;border-radius:9px;border:1px solid #999;border-bottom:2px solid #888;background:linear-gradient(#fafafa,#c4c4c4);text-align:center;line-height:18px}
.btns .yes{background:#b80000;color:#fff;font-weight:bold;border:1px solid #700;outline:1px dotted #200;outline-offset:-3px;letter-spacing:0}
.mouse{position:absolute;left:563px;top:225px;width:13px;height:20px}
```
